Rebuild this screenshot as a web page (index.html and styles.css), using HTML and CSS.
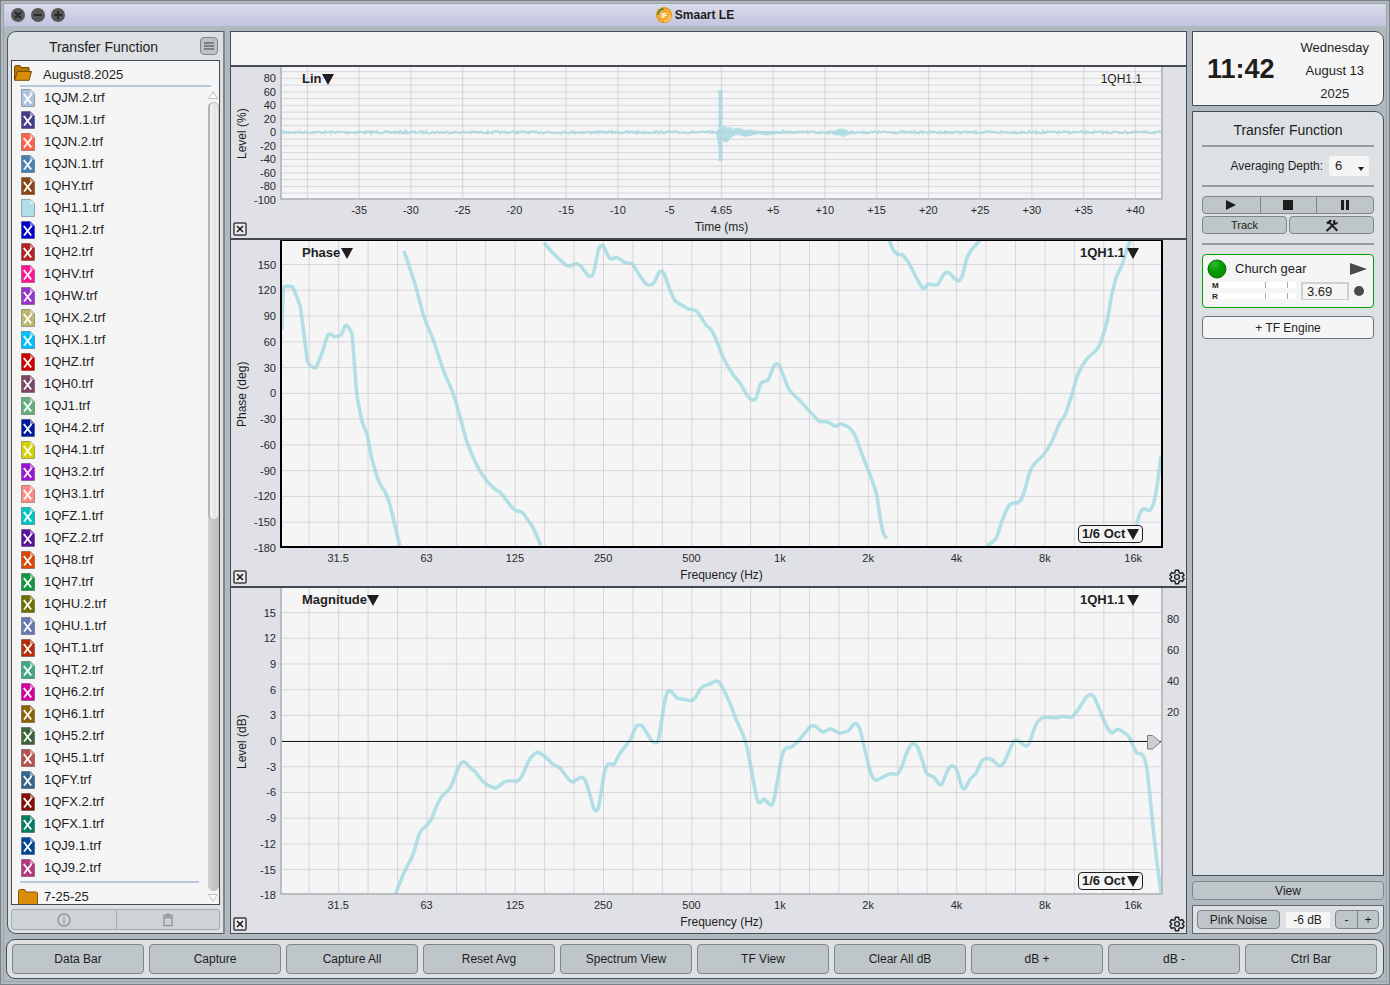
FILE: index.html
```html
<!DOCTYPE html>
<html lang="en">
<head>
<meta charset="utf-8">
<title>Smaart LE</title>
<link rel="stylesheet" href="styles.css">
</head>
<body>
<svg class="defs" aria-hidden="true">
  <symbol id="file" viewBox="0 0 14 18">
    <path d="M.5.5h8.8l4.2 4.200V17.500H.5z" fill="currentColor"/>
    <path d="M.5.5h8.800l4.200 4.200V17.500H.5z" fill="none" stroke="#000" stroke-opacity=".28"/>
    <path d="M9 .8v4.200h4.200z" fill="#fff" fill-opacity=".5"/>
  </symbol>
  <symbol id="filex" viewBox="0 0 14 18">
    <use href="#file"/>
    <path d="M2.800 5l7.400 9.500M10.600 5L3 14.500" stroke="#fff" stroke-width="1.900" fill="none"/>
  </symbol>
  <symbol id="closebox" viewBox="0 0 14 14">
    <rect x="1" y="1" width="12" height="12" rx="1" fill="#eceef0" stroke="#3c3f42" stroke-width="1.500"/>
    <path d="M4 4l6 6M10 4l-6 6" stroke="#222" stroke-width="1.700"/>
  </symbol>
  <symbol id="gear" viewBox="0 0 24 24">
    <path d="M9.600 2h4.800l.6 3.300 2 1.200 3.200-1.200 2.400 4.100-2.600 2.200v.8l2.600 2.200-2.400 4.100-3.200-1.200-2 1.200-.6 3.300H9.600L9 18.700l-2-1.200-3.200 1.200-2.400-4.100L4 12.400v-.8L1.400 9.400l2.400-4.100L7 6.500l2-1.200z" fill="none" stroke="#1f2224" stroke-width="2.200" stroke-linejoin="round"/>
    <circle cx="12" cy="12" r="3.600" fill="none" stroke="#1f2224" stroke-width="2"/>
  </symbol>
</svg>

<div class="window">
  <header class="titlebar">
    <div class="lights">
      <button class="light" aria-label="Close"><svg viewBox="0 0 14 14"><path d="M4 4l6 6M10 4l-6 6"/></svg></button>
      <button class="light" aria-label="Minimize"><svg viewBox="0 0 14 14"><path d="M3 7h8"/></svg></button>
      <button class="light" aria-label="Zoom"><svg viewBox="0 0 14 14"><path d="M3 7h8M7 3v8"/></svg></button>
    </div>
    <h1 class="apptitle">
      <svg class="logo" viewBox="0 0 16 16" aria-hidden="true">
        <circle cx="8" cy="8" r="8" fill="#e89a1c"/><circle cx="8" cy="8" r="6.600" fill="#f3ab36"/>
        <path d="M2 7.500A6 6 0 0 1 7.500 2" fill="none" stroke="#2f7d55" stroke-width="1.600"/>
        <path d="M14.300 8A6.300 6.300 0 0 1 8 14.300" fill="none" stroke="#ffd36a" stroke-width="1.200"/>
        <text x="8.300" y="10.500" class="logotext">IF</text>
      </svg>Smaart LE
    </h1>
  </header>

  <main class="main">
    <aside class="databar">
      <div class="databar-head">
        <h2 class="panel-title">Transfer Function</h2>
        <button class="menu" aria-label="Menu"><svg viewBox="0 0 10 8"><path d="M0 1h10M0 4h10M0 7h10"/></svg></button>
      </div>
      <div class="browser">
        <div class="folder">
          <svg class="folder-open" viewBox="0 0 18 16"><path d="M.5 15V1.500L1.500.5h4.500l1.500 2h7.500v4" fill="#b87400" stroke="#7a4c00"/><path d="M.5 15.300L3.500 6.500h14L15 15.300z" fill="#d98d08" stroke="#7a4c00"/></svg>
          August8.2025
        </div>
        <div class="rule"></div>
        <div class="scroller">
          <div class="listcol">
            <ul class="files">
              <li><svg style="color:#b0c4de"><use href="#filex"/></svg>1QJM.2.trf</li>
              <li><svg style="color:#483d8b"><use href="#filex"/></svg>1QJM.1.trf</li>
              <li><svg style="color:#ff6347"><use href="#filex"/></svg>1QJN.2.trf</li>
              <li><svg style="color:#4682b4"><use href="#filex"/></svg>1QJN.1.trf</li>
              <li><svg style="color:#8b4513"><use href="#filex"/></svg>1QHY.trf</li>
              <li><svg style="color:#b0e0e6"><use href="#file"/></svg>1QH1.1.trf</li>
              <li><svg style="color:#0000cd"><use href="#filex"/></svg>1QH1.2.trf</li>
              <li><svg style="color:#b22222"><use href="#filex"/></svg>1QH2.trf</li>
              <li><svg style="color:#ff1493"><use href="#filex"/></svg>1QHV.trf</li>
              <li><svg style="color:#9932cc"><use href="#filex"/></svg>1QHW.trf</li>
              <li><svg style="color:#bdb76b"><use href="#filex"/></svg>1QHX.2.trf</li>
              <li><svg style="color:#00bfff"><use href="#filex"/></svg>1QHX.1.trf</li>
              <li><svg style="color:#cc0000"><use href="#filex"/></svg>1QHZ.trf</li>
              <li><svg style="color:#7d4666"><use href="#filex"/></svg>1QH0.trf</li>
              <li><svg style="color:#66ad7a"><use href="#filex"/></svg>1QJ1.trf</li>
              <li><svg style="color:#001a99"><use href="#filex"/></svg>1QH4.2.trf</li>
              <li><svg style="color:#d2d200"><use href="#filex"/></svg>1QH4.1.trf</li>
              <li><svg style="color:#9a14d2"><use href="#filex"/></svg>1QH3.2.trf</li>
              <li><svg style="color:#ff8a80"><use href="#filex"/></svg>1QH3.1.trf</li>
              <li><svg style="color:#00c4c4"><use href="#filex"/></svg>1QFZ.1.trf</li>
              <li><svg style="color:#5a149a"><use href="#filex"/></svg>1QFZ.2.trf</li>
              <li><svg style="color:#dc4600"><use href="#filex"/></svg>1QH8.trf</li>
              <li><svg style="color:#0f9640"><use href="#filex"/></svg>1QH7.trf</li>
              <li><svg style="color:#6f6f00"><use href="#filex"/></svg>1QHU.2.trf</li>
              <li><svg style="color:#6478b4"><use href="#filex"/></svg>1QHU.1.trf</li>
              <li><svg style="color:#b42d0a"><use href="#filex"/></svg>1QHT.1.trf</li>
              <li><svg style="color:#3caa82"><use href="#filex"/></svg>1QHT.2.trf</li>
              <li><svg style="color:#d200a0"><use href="#filex"/></svg>1QH6.2.trf</li>
              <li><svg style="color:#8c6400"><use href="#filex"/></svg>1QH6.1.trf</li>
              <li><svg style="color:#3c643c"><use href="#filex"/></svg>1QH5.2.trf</li>
              <li><svg style="color:#b95050"><use href="#filex"/></svg>1QH5.1.trf</li>
              <li><svg style="color:#32648c"><use href="#filex"/></svg>1QFY.trf</li>
              <li><svg style="color:#820f00"><use href="#filex"/></svg>1QFX.2.trf</li>
              <li><svg style="color:#007d5f"><use href="#filex"/></svg>1QFX.1.trf</li>
              <li><svg style="color:#004696"><use href="#filex"/></svg>1QJ9.1.trf</li>
              <li><svg style="color:#b4377d"><use href="#filex"/></svg>1QJ9.2.trf</li>
            </ul>
            <div class="rule"></div>
            <div class="folder folder-next">
              <svg class="folder-shut" viewBox="0 0 20 18"><path d="M.5 17.500V1.500L1.500.5h5l2 2.500h10l1 1v13.500z" fill="#d98d08" stroke="#8a5800"/></svg>
              7-25-25
            </div>
          </div>
          <div class="scrollbar" aria-hidden="true">
            <svg viewBox="0 0 10 8"><path d="M5 .8L9.300 7.500H.7z"/></svg>
            <div class="track"><div class="thumb"></div></div>
            <svg viewBox="0 0 10 8"><path d="M5 7.200L9.300.5H.7z"/></svg>
          </div>
        </div>
      </div>
      <div class="filetools">
        <button aria-label="Info" disabled><svg viewBox="0 0 14 14"><circle cx="7" cy="7" r="6"/><path d="M7 6v4.500M7 3.300v1.400"/></svg></button>
        <button aria-label="Delete" disabled><svg viewBox="0 0 14 14"><path d="M2 2.500h10M5 1.300h4M3 4.500v8.200h8V4.500z"/></svg></button>
      </div>
    </aside>

    <section class="plots">
      <div class="plots-head"></div>

      <section class="chart chart-impulse">
        <div class="ylabel">Level (%)</div>
        <div class="plot">
          <svg class="canvas" id="impulse"></svg>
          <div class="overlay">
            <span class="pick"><select aria-label="Plot type"><option>Lin</option></select></span>
            <span class="trace">1QH1.1</span>
          </div>
        </div>
        <div class="yright"></div>
        <button class="closeplot" aria-label="Close plot"><svg><use href="#closebox"/></svg></button>
        <div class="xlabel">Time (ms)</div>
      </section>

      <section class="chart chart-phase">
        <div class="ylabel">Phase (deg)</div>
        <div class="plot plot-active">
          <svg class="canvas" id="phase"></svg>
          <div class="overlay">
            <span class="pick"><select aria-label="Plot type"><option>Phase</option></select></span>
            <span class="pick pick-trace"><select aria-label="Trace"><option>1QH1.1</option></select></span>
          </div>
          <span class="pick smoothing"><select aria-label="Smoothing"><option>1/6 Oct</option></select></span>
        </div>
        <div class="yright"></div>
        <button class="closeplot" aria-label="Close plot"><svg><use href="#closebox"/></svg></button>
        <div class="xlabel">Frequency (Hz)</div>
        <button class="settings" aria-label="Settings"><svg><use href="#gear"/></svg></button>
      </section>

      <section class="chart chart-magnitude">
        <div class="ylabel">Level (dB)</div>
        <div class="plot">
          <svg class="canvas" id="magnitude"></svg>
          <div class="overlay">
            <span class="pick"><select aria-label="Plot type"><option>Magnitude</option></select></span>
            <span class="pick pick-trace"><select aria-label="Trace"><option>1QH1.1</option></select></span>
          </div>
          <span class="pick smoothing"><select aria-label="Smoothing"><option>1/6 Oct</option></select></span>
        </div>
        <div class="yright"></div>
        <button class="closeplot" aria-label="Close plot"><svg><use href="#closebox"/></svg></button>
        <div class="xlabel">Frequency (Hz)</div>
        <button class="settings" aria-label="Settings"><svg><use href="#gear"/></svg></button>
      </section>
    </section>

    <aside class="control">
      <div class="clock">
        <time class="time">11:42</time>
        <div class="date"><span>Wednesday</span><span>August 13</span><span>2025</span></div>
      </div>
      <div class="tf">
        <h2 class="panel-title">Transfer Function</h2>
        <hr>
        <div class="depth">
          <label for="depth">Averaging Depth:</label>
          <span class="depthbox"><select id="depth"><option>6</option></select></span>
        </div>
        <hr>
        <div class="transport">
          <button aria-label="Start"><svg viewBox="0 0 12 10"><path d="M1 0l10 5L1 10z"/></svg></button>
          <button aria-label="Stop"><svg viewBox="0 0 12 10"><path d="M1 0h10v10H1z"/></svg></button>
          <button aria-label="Pause"><svg viewBox="0 0 12 10"><path d="M2 0h3v10H2zM7 0h3v10H7z"/></svg></button>
        </div>
        <div class="tools">
          <button class="btn">Track</button>
          <button class="btn" aria-label="Tools"><svg viewBox="0 0 14 13"><path d="M1.300 3.600L5 .8l2.200.6L5.500 3.300 13 11l-1.400 1.400L4.200 4.700 2.700 5.600z" fill="#1e1e1e"/><path d="M1.500 12L9 5" fill="none" stroke="#1e1e1e" stroke-width="2"/><path d="M12.800 2.600A2.500 2.500 0 1 1 10.500.7L9.900 2.700l1.300 1z" fill="#1e1e1e"/></svg></button>
        </div>
        <hr>
        <div class="engine">
          <div class="engine-top">
            <svg class="led" viewBox="0 0 20 20"><defs><radialGradient id="g" cx=".35" cy=".25" r=".8"><stop offset="0" stop-color="#35b935"/><stop offset=".5" stop-color="#009c00"/><stop offset="1" stop-color="#009000"/></radialGradient></defs><circle cx="10" cy="10" r="9" fill="url(#g)" stroke="#0b6b0b"/></svg>
            <span class="engine-name">Church gear</span>
            <button aria-label="Run"><svg class="run" viewBox="0 0 17 12"><path d="M0 0l17 6L0 12z" fill="#4a4a4a"/></svg></button>
          </div>
          <div class="engine-bottom">
            <div class="meters">
              <b>M</b><i></i>
              <b>R</b><i></i>
            </div>
            <input class="delay" aria-label="Delay" value="3.69">
            <span class="dot"></span>
          </div>
        </div>
        <button class="addengine">+ TF Engine</button>
      </div>
      <button class="btn view">View</button>
      <div class="generator">
        <button class="btn noise">Pink Noise</button>
        <output class="gain">-6 dB</output>
        <div class="step"><button aria-label="Decrease level">-</button><button aria-label="Increase level">+</button></div>
      </div>
    </aside>
  </main>

  <nav class="commands">
    <button class="btn">Data Bar</button>
    <button class="btn">Capture</button>
    <button class="btn">Capture All</button>
    <button class="btn">Reset Avg</button>
    <button class="btn">Spectrum View</button>
    <button class="btn">TF View</button>
    <button class="btn">Clear All dB</button>
    <button class="btn">dB +</button>
    <button class="btn">dB -</button>
    <button class="btn">Ctrl Bar</button>
  </nav>
</div>
<script src="charts.js"></script>
</body>
</html>
```
FILE: styles.css
```css
* { box-sizing: border-box; }
html, body { height: 100%; }
body {
  margin: 0;
  background: #b1b9c0;
  color: #1e1e1e;
  font-family: "Liberation Sans", Arial, Helvetica, sans-serif;
  font-size: 13px;
  line-height: 16px;
}
button, select, input { font: inherit; color: inherit; margin: 0; padding: 0; border: 0; background: none; }
button { display: flex; align-items: center; justify-content: center; }
select { appearance: none; }
h1, h2, ul { margin: 0; padding: 0; list-style: none; }
.defs { display: none; }

.window {
  height: 100%;
  display: flex;
  flex-direction: column;
  border: 1px solid #7a8186;
  outline: 1px solid #9ea5aa;
  outline-offset: -4px;
  padding: 3px;
}

.titlebar {
  flex: none;
  height: 22px;
  display: grid;
  grid-template-columns: 1fr auto 1fr;
  align-items: center;
  background: linear-gradient(#d9daea, #c2c5de);
}
.lights { display: flex; gap: 6px; padding-left: 7px; }
.light { width: 14px; height: 14px; border-radius: 50%; background: #575757; }
.light svg { width: 14px; height: 14px; stroke: #2a2a2a; stroke-width: 2; fill: none; }
.apptitle { display: flex; align-items: center; gap: 3px; font-size: 12px; font-weight: bold; }
.logo { width: 16px; height: 16px; }
.logotext { font-size: 7px; font-weight: bold; fill: #fff; text-anchor: middle; }

.main {
  flex: 1;
  min-height: 0;
  display: grid;
  grid-template-columns: 218px minmax(0, 1fr) 192px;
  grid-template-rows: minmax(0, 1fr);
  column-gap: 5px;
  padding: 5px 2px 5px 3px;
}
.panel-title { font-size: 14px; font-weight: normal; text-align: center; }

/* data bar */
.databar {
  display: flex;
  flex-direction: column;
  padding: 0 3px 3px;
  border: 1px solid #4c565c;
  border-right: 2px solid #7f888e;
  border-radius: 9px 0 0 9px;
  background: #dde1e4;
}
.databar-head { height: 28px; display: flex; align-items: center; }
.databar-head .panel-title { flex: 1; padding: 2px 4px 0 0; }
.menu { width: 18px; height: 18px; margin-right: 2px; border: 1px solid #7d868a; border-radius: 4px; background: #bcc3c7; }
.menu svg { width: 10px; height: 8px; stroke: #3a3f42; stroke-width: 1; }
.browser {
  flex: 1;
  min-height: 0;
  display: flex;
  flex-direction: column;
  overflow: hidden;
  border: 1px solid #434b50;
  background: #f5f5f5;
}
.folder { flex: none; height: 24px; display: flex; align-items: center; gap: 11px; padding: 3px 0 0 2px; }
.folder-open { width: 18px; height: 16px; margin-bottom: 4px; }
.rule { flex: none; height: 2px; margin: 0 8px; background: #b8c8de; }
.scroller { flex: 1; min-height: 0; display: flex; }
.listcol { flex: 1; overflow: hidden; }
.listcol .rule { margin-top: 2px; }
.files li { height: 22px; display: flex; align-items: center; gap: 9px; padding-left: 9px; line-height: 18px; }
.files svg { width: 14px; height: 18px; }
.folder-next { gap: 6px; padding: 3px 0 0 6px; }
.folder-shut { width: 20px; height: 18px; margin-top: 2px; }
.scrollbar { width: 12px; display: flex; flex-direction: column; align-items: center; gap: 3px; padding: 4px 0 2px; }
.scrollbar svg { flex: none; width: 10px; height: 8px; fill: #fff; stroke: #bdbdbd; }
.track { flex: 1; width: 11px; border-radius: 6px; background: linear-gradient(90deg, #d2d2d2, #bcbcbc); }
.thumb { height: 53%; border: 1px solid #c4c4c4; border-left: 2px solid #b4b4b4; border-radius: 6px; background: linear-gradient(90deg, #f5f5f5, #e4e4e4 60%, #f0f0f0); }
.filetools { flex: none; height: 21px; margin-top: 4px; display: grid; grid-template-columns: 1fr 1fr; border: 1px solid #a4abaf; border-radius: 3px; background: #ced3d6; }
.filetools button + button { border-left: 1px solid #a4abaf; }
.filetools svg { width: 14px; height: 14px; fill: none; stroke: #8e9497; stroke-width: 1.3; }

/* plots */
.plots {
  display: grid;
  grid-template-rows: 33px minmax(0, 173fr) minmax(0, 348fr) minmax(0, 347fr);
  border: 1px solid #434d53;
  background: #dfe1e6;
}
.plots-head { background: #f5f5f5; }
.chart {
  min-height: 0;
  display: grid;
  grid-template-columns: 49px minmax(0, 1fr) 23px;
  grid-template-rows: minmax(0, 1fr) 38px;
}
.chart { border-top: 2px solid #434b50; }
.ylabel { writing-mode: vertical-rl; transform: rotate(180deg); width: 16px; margin-left: 3px; text-align: center; font-size: 12px; }
.plot { position: relative; border: 2px solid #b9bdc2; border-top: 0; background: #f5f5f5; }
.plot-active { border: 2px solid #000; border-top: 1px solid #000; }
.canvas { position: absolute; inset: 0; width: 100%; height: 100%; overflow: visible; }
.tick { font-size: 11px; fill: #2a2a2a; }
.grid { stroke: #c3c5d0; stroke-opacity: .62; stroke-width: 1; }
.curve { fill: none; stroke: #b0e0e6; stroke-width: 3.6; stroke-linejoin: round; stroke-linecap: butt; }
.noise-curve { fill: none; stroke: #b0e0e6; stroke-width: 2; }
.spike { stroke: #b0e0e6; stroke-width: 4; }
.burst { fill: #b0e0e6; }
.zero { stroke: #1a1a1a; stroke-width: 1; }
.overlay { position: relative; display: flex; justify-content: space-between; padding: 4px 19px 0 20px; }
.trace { font-size: 12px; }
.pick { display: inline-flex; align-items: center; font-weight: bold; }
.pick::after { content: ""; border: 6px solid transparent; border-top: 11px solid #1e1e1e; border-bottom: 0; }
.pick-trace { gap: 2px; margin-right: 3px; }
.smoothing { position: absolute; right: 18px; bottom: 3px; height: 18px; gap: 1px; padding: 0 3px; border: 1px solid #1e1e1e; border-radius: 4px; background: #f5f5f5; }
.closeplot { align-self: end; width: 14px; height: 14px; margin: 0 0 2px 2px; }
.closeplot svg { width: 14px; height: 14px; }
.xlabel { align-self: end; text-align: center; font-size: 12px; padding-bottom: 3px; }
.settings { align-self: end; width: 16px; height: 16px; margin: 0 0 1px 6px; }
.settings svg { width: 16px; height: 16px; }

/* control bar */
.control { display: flex; flex-direction: column; gap: 5px; }
.clock {
  flex: none;
  height: 75px;
  display: flex;
  align-items: center;
  padding: 0 14px;
  justify-content: space-between;
  border: 1px solid #434d53;
  border-radius: 0 9px 9px 0;
  background: #f5f5f5;
}
.time { font-size: 27px; line-height: 32px; font-weight: bold; }
.date { display: flex; flex-direction: column; line-height: 23px; text-align: center; padding-top: 3px; }
.tf { flex: 1; min-height: 0; padding: 10px 9px; border: 1px solid #434d53; border-radius: 0 9px 0 0; background: #dde1e4; }
hr { height: 2px; margin: 7px 0; border: 0; background: #969b9f; }
.depth { display: flex; justify-content: flex-end; align-items: center; gap: 6px; height: 20px; margin: 9px 5px 9px 0; font-size: 12px; }
.depthbox { position: relative; width: 40px; height: 20px; border-radius: 3px; background: #f5f5f5; font-size: 13px; }
.depthbox select { width: 100%; height: 100%; padding-left: 6px; }
.depthbox::after { content: ""; position: absolute; right: 5px; bottom: 5px; border: 3px solid transparent; border-top: 4px solid #1e1e1e; border-bottom: 0; pointer-events: none; }
.btn { border: 1px solid #7d868a; border-radius: 4px; background: #bfc6ca; font-size: 12px; }
.transport { height: 18px; margin-top: 9px; display: grid; grid-template-columns: repeat(3, 1fr); border: 1px solid #7d868a; border-radius: 4px; background: #bfc6ca; }
.transport button + button { border-left: 1px solid #7d868a; }
.transport svg { width: 12px; height: 10px; fill: #1e1e1e; }
.tools { height: 18px; margin: 2px 0 9px; display: grid; grid-template-columns: 1fr 1fr; gap: 2px; }
.tools .btn { font-size: 11px; }
.tools svg { width: 14px; height: 13px; }
.engine { height: 54px; margin-top: 9px; padding: 4px; border: 1px solid #00a000; border-radius: 4px; background: #f5f5f5; }
.engine-top { display: flex; align-items: center; height: 20px; }
.led { width: 20px; height: 20px; margin-right: 8px; }
.engine-name { flex: 1; }
.run { width: 17px; height: 12px; margin-right: 2px; }
.engine-bottom { display: flex; align-items: center; gap: 5px; padding: 3px 5px 0 5px; }
.meters { flex: 1; display: grid; grid-template-columns: 7px 1fr; row-gap: 4px; font-size: 8px; line-height: 7px; }
.meters i { height: 6px; background: linear-gradient(#aaa, #aaa) 60% 0 / 1px 100% no-repeat, linear-gradient(#aaa, #aaa) 90% 0 / 1px 100% no-repeat, #fff; }
.delay { width: 48px; height: 18px; padding-left: 4px; border: 2px solid #d0d0d0; border-bottom-width: 1px; border-radius: 0; background: #f5f5f5; }
.dot { width: 10px; height: 10px; border-radius: 50%; background: #4a4a4a; }
.addengine { width: 100%; height: 23px; margin-top: 8px; border: 1px solid #6d757a; border-radius: 4px; background: #f5f5f5; font-size: 12px; }
.view { flex: none; height: 19px; }
.generator { flex: none; height: 29px; display: flex; align-items: center; justify-content: space-between; padding: 0 4px; border: 1px solid #5d676d; border-radius: 0 0 9px 0; background: #dde1e4; font-size: 12px; }
.noise { width: 83px; height: 19px; }
.gain { width: 44px; background: #f5f5f5; text-align: center; }
.step { width: 44px; height: 19px; display: grid; grid-template-columns: 1fr 1fr; border: 1px solid #7d868a; border-radius: 4px; background: #bfc6ca; }
.step button + button { border-left: 1px solid #7d868a; }

/* command bar */
.commands {
  flex: none;
  height: 40px;
  display: grid;
  grid-template-columns: repeat(10, 1fr);
  gap: 5px;
  margin: 0 2px 2px;
  padding: 4px 6px 4px 5px;
  border: 1px solid #434d53;
  border-radius: 9px;
  background: #dde1e4;
}
```
FILE: charts.js
```js
// Each chart draws in its own unit box, stretched to the plot area.
const NS = 'http://www.w3.org/2000/svg';

function add(parent, tag, attrs, text) {
  const el = document.createElementNS(NS, tag);
  for (const k in attrs) el.setAttribute(k, attrs[k]);
  if (text !== undefined) el.textContent = text;
  parent.appendChild(el);
  return el;
}

// Catmull-Rom spline through the points, low tension.
function spline(str, k = 8) {
  const p = str.trim().split(/\s+/).map(s => s.split(',').map(Number));
  let d = 'M' + p[0];
  for (let i = 0; i < p.length - 1; i++) {
    const a = p[i - 1] || p[i], b = p[i], c = p[i + 1], e = p[i + 2] || c;
    d += ' C' + [b[0] + (c[0] - a[0]) / k, b[1] + (c[1] - a[1]) / k,
      c[0] - (e[0] - b[0]) / k, c[1] - (e[1] - b[1]) / k, c[0], c[1]].map(n => n.toFixed(1)).join(' ');
  }
  return d;
}

function chart(id, box, opts) {
  const svg = document.getElementById(id);
  const [x0, y0, w, h] = box;
  const px = x => ((x - x0) / w * 100).toFixed(3) + '%';
  const py = y => ((y - y0) / h * 100).toFixed(3) + '%';
  const area = add(svg, 'svg', { x: 0, y: 0, width: '100%', height: '100%', viewBox: box.join(' '), preserveAspectRatio: 'none' });
  opts.draw(area);
  for (const x of opts.gridX) add(svg, 'line', { class: 'grid', x1: px(x), x2: px(x), y1: 0, y2: '100%' });
  for (const y of opts.gridY) add(svg, 'line', { class: 'grid', x1: 0, x2: '100%', y1: py(y), y2: py(y) });
  for (const [x, t] of opts.ticksX) add(svg, 'text', { class: 'tick', x: px(x), y: '100%', dy: 16, 'text-anchor': 'middle' }, t);
  for (const [y, t] of opts.ticksY) add(svg, 'text', { class: 'tick', x: 0, y: py(y), dx: -6, dy: 4, 'text-anchor': 'end' }, t);
  for (const [y, t] of opts.ticksRight || []) add(svg, 'text', { class: 'tick', x: '100%', y: py(y), dx: 6, dy: 4 }, t);
  if (opts.zero) {
    add(svg, 'line', { class: 'zero', x1: 0, x2: '100%', y1: py(opts.zero), y2: py(opts.zero) });
    const m = add(svg, 'svg', { x: '100%', y: py(opts.zero), overflow: 'visible' });
    add(m, 'path', { d: 'M-13.500 -6h5L-.5 .7L-8.500 7.500h-5z', fill: '#cfcfcf', stroke: '#7a7a7a' });
  }
}

const range = (n, f) => Array.from({ length: n }, (_, i) => f(i));
const octaves = ['31.5', '63', '125', '250', '500', '1k', '2k', '4k', '8k', '16k'].map((t, i) => [338.2 + 88.33 * i, t]);
const thirds = range(29, i => 309.2 + 29.43 * i);

// Impulse response
chart('impulse', [282, 67, 879, 131], {
  gridX: range(17, i => 721.4 + 51.75 * (i - 8)),
  gridY: range(19, i => 132.4 + 6.75 * (i - 9)),
  ticksX: range(16, i => [721.4 + 51.75 * (i - 7), i === 7 ? '4.65' : (i < 7 ? '' : '+') + (i - 7) * 5]),
  ticksY: range(10, i => [78.4 + 13.5 * i, 80 - 20 * i]),
  draw(area) {
    let seed = 7;
    const rnd = () => (seed = (seed * 16807) % 2147483647) / 2147483647 - .5;
    let d = 'M282 132.300';
    for (let x = 283; x < 1162; x++) d += 'L' + x + ' ' + (132.3 + rnd() * 2.4).toFixed(1);
    add(area, 'path', { class: 'noise-curve', d });
    add(area, 'path', { class: 'burst', d: 'M716 132L719 129L722 128L724 125.500L727 127.500L730 127L733 129L736 127.500L741 128.500L745 130L751 129.500L755 131L768 131L780 131.500L783 129L786 131L798 131.500L800 133.500L780 133.500L766 135.500L758 134L750 136L745 137L738 135L733 136L730 139L727 142.500L724 142L722 140L718 146Z' });
    add(area, 'path', { class: 'burst', d: 'M830 132L836 130L840 128.500L845 129L850 131.500L860 132L848 135L843 137L839 135.500L834 135Z' });
    add(area, 'line', { class: 'spike', x1: 720.5, x2: 720.5, y1: 90, y2: 161 });
  }
});

// Phase
chart('phase', [282, 241, 879, 305], {
  gridX: thirds,
  gridY: range(11, i => 264.5 + 25.77 * i),
  ticksX: octaves,
  ticksY: range(12, i => [264.5 + 25.77 * i, 150 - 30 * i]),
  draw(area) {
    add(area, 'path', { class: 'curve', d: spline('281.7,330 283.5,287.7 292.5,287 300.5,307.5 307.5,361.5 312.3,367 316,367.7 322.5,351.5 327.5,335.5 330,334 335.3,336.7 341,335 345.3,325.7 347.5,325.7 352,334 354.7,368 357.3,398.3 362.3,422.3 367.3,435 371,455 376.7,475.5 381,485.7 385.3,492.3 389.3,502.7 394,521.7 400,546', 24) });
    [
      '404,251 414.3,281.7 424,316.7 433.3,340 443.3,370 453.3,394 460,416.7 466.7,441 474,459 480,471 486.7,480.7 494.3,488.7 500.7,493 510,505 515.3,510.3 522,512.3 526.7,518.3 533.3,528.3 541,545.7',
      '544,243 551.7,251.7 560,259.7 565.7,265 570,266 576.7,263.7 581.7,267.3 587.7,275.3 590,276.3 592.7,275 595.3,265 598.3,250.3 600.7,246 603.3,246 607.7,255 611,259 617.3,257.7 626,263 632.3,264 640,276 645.7,283.7 650,285 654,282.7 659,272.3 661,271.3 664,273.3 670,290 675,300.7 681.7,305 688.3,309 696.7,311.3 706.7,325.7 710,328.3 715,337 723.3,357.7 733.3,375 740,383 747.3,395.7 752.3,399.7 756,398.3 761,383.3 768.3,379.7 773.3,367 776.7,364 780,367 787.3,385.7 792.3,393.7 798.3,399 810,411.7 819.3,421.3 827.3,421.7 835,426.3 841,424 850,428.3 855,435.7 861.7,453.3 868.3,470.3 873.3,483.7 876.7,495 880,516.7 883.3,532.7 886.7,538.3',
      '889.3,241 893.3,250 897.7,254.3 902.3,255 908.3,262.3 916.7,278.3 921.7,287 925,287.7 928.3,284 937.3,284.7 944.3,273.7 949.3,273 955,279 959,281 962.3,275.7 966.7,259 970.7,250.7 976.7,244 980,240.5',
      '987.3,546 996,538.3 1001.7,521.7 1008.3,506.7 1012.7,503 1017.7,502.7 1022.7,496.7 1029.3,473.3 1034,464.3 1043.3,455 1051.7,441.7 1060,422.3 1065,415 1070.7,398.3 1078.3,373.3 1087.3,358.3 1095,351.7 1100.7,342.3 1107.3,320 1111.7,295 1116,278.3 1121.7,265.7 1126.7,250 1130,241',
      '1133.3,543.3 1136.7,525 1140,513.3 1144,508.7 1149.3,510.3 1153.3,504.3 1156.7,488.3 1161,455.7'
    ].forEach(s => add(area, 'path', { class: 'curve', d: spline(s) }));
  }
});

// Magnitude
chart('magnitude', [282, 588, 879, 305], {
  gridX: thirds,
  gridY: range(11, i => 612.6 + 25.7 * i),
  ticksX: octaves,
  ticksY: range(12, i => [612.6 + 25.7 * i, 15 - 3 * i]),
  ticksRight: [[619, 80], [650, 60], [681, 40], [712, 20]],
  zero: 741.5,
  draw(area) {
    add(area, 'path', { class: 'curve', d: spline('395.7,894 401.7,878.3 406.7,867.3 411.7,857.7 415,848.3 418.3,836.7 421.7,830 427.3,825 431.7,818.3 436.7,806 441.7,796.7 449.3,789 453.3,781 458.3,767.7 461.7,762.7 465,762.3 470,767.3 475.7,772.3 482.3,781 488.3,785.3 496,788 504,782 510,780.7 516.7,781.3 521.7,776.7 529,760.3 535,753.7 538.3,752.3 545,756.7 553.3,764.3 560,768 568.3,779 572.7,782 581,777.3 585,780 590,795 593.3,807.7 595.7,810.7 598.3,808 601,793.3 604,774.3 606.7,766 609.3,763.7 614,764.3 620,753.3 630,740 636,726.7 639.3,725 642.7,726.7 651.7,740.7 655,742.7 658,741.3 660.7,726.7 665,700 668.3,691.3 671.3,691.3 677.3,698.3 684,699.3 690.7,700.7 695,698 701.7,687.3 710,684 716,681 720,683.3 729.3,701.7 736,719.3 743.3,735.3 747.3,748.3 751.7,771.7 755,790 758.3,802 761,802 764.3,799 769.3,804.3 772.3,804.3 775.3,793.3 780,766 783.3,752 786.7,747.7 791.7,746.7 800,739 810,727 815,726 822.7,732 831,728.7 839,733 848.3,730.7 853.3,724.7 856.7,724 860,729.3 864,746 869.3,768.3 872.7,777.3 876.7,780 889.3,774 897.3,774 901.7,766.7 906.7,752.7 910.7,745.3 914,743.7 917.3,746.7 921.7,758.3 926.7,773.5 933.3,776.7 939.3,784.3 942.3,783.3 948.3,769 952.7,766 956.7,770 961.7,786 965,788.7 970.7,778.3 976,773.3 981.7,761 985.7,758.7 991.7,759.7 999.3,765.7 1004,762.7 1013.3,741.7 1017.3,740 1025.7,746 1029,743.3 1035,726.7 1040,719.3 1045,717.3 1056.7,717.7 1063.3,716.3 1071.7,717 1078.3,709.3 1086.7,696.7 1090.7,694.7 1094.3,697.3 1102.7,717.3 1108.3,729.3 1112.3,732.7 1118.3,729.3 1128.3,736 1132.3,744 1136.7,752.7 1142.3,754.7 1145.7,762.7 1148.3,780 1152.3,820 1156.7,860 1161,893') });
  }
});
```
